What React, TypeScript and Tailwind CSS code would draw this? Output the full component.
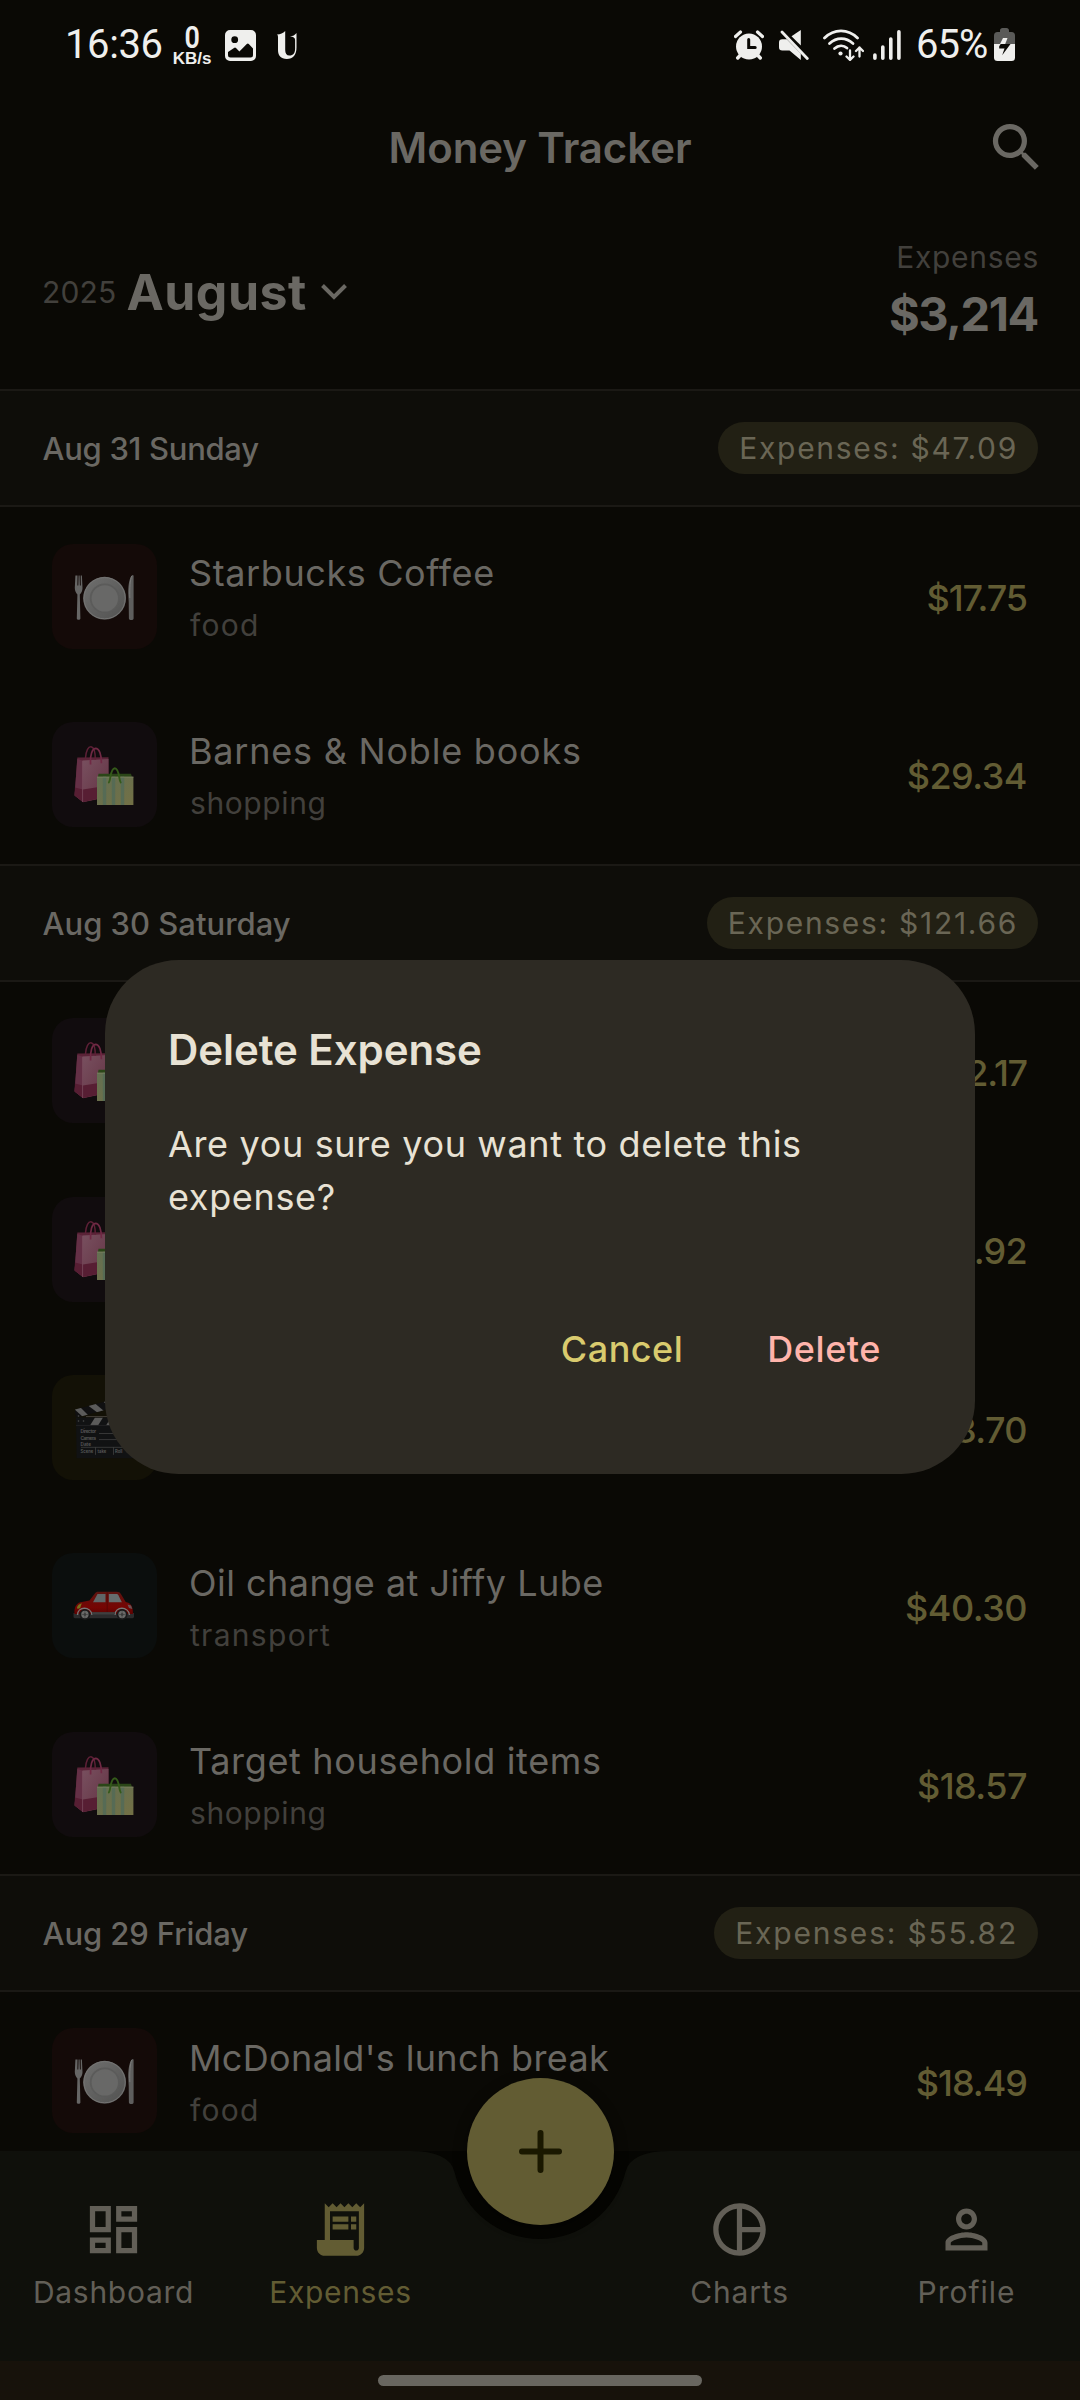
import type { ReactNode } from "react";

type Category = "food" | "shopping" | "movie" | "transport";

type Expense = {
  title: string;
  category: Category;
  amount: string;
  titleTracking?: string;
  amountTracking: string;
};

type Day = {
  date: string;
  dateTracking: string;
  total: string;
  totalTracking: string;
  expenses: Expense[];
};

const DAYS: Day[] = [
  {
    date: "Aug 31 Sunday",
    dateTracking: "tracking-[-0.3px]",
    total: "Expenses: $47.09",
    totalTracking: "tracking-[1.7px]",
    expenses: [
      { title: "Starbucks Coffee", category: "food", amount: "$17.75", titleTracking: "tracking-[0.6px]", amountTracking: "tracking-[-1.1px]" },
      { title: "Barnes & Noble books", category: "shopping", amount: "$29.34", titleTracking: "tracking-[0.78px]", amountTracking: "tracking-[-0.5px]" },
    ],
  },
  {
    date: "Aug 30 Saturday",
    dateTracking: "tracking-[0px]",
    total: "Expenses: $121.66",
    totalTracking: "tracking-[1.7px]",
    expenses: [
      { title: "", category: "shopping", amount: "$12.17", amountTracking: "tracking-[-1.2px]" },
      { title: "", category: "shopping", amount: "$31.92", amountTracking: "tracking-[-0.7px]" },
      { title: "", category: "movie", amount: "$18.70", amountTracking: "tracking-[-0.6px]" },
      { title: "Oil change at Jiffy Lube", category: "transport", amount: "$40.30", titleTracking: "tracking-[0.48px]", amountTracking: "tracking-[-0.5px]" },
      { title: "Target household items", category: "shopping", amount: "$18.57", titleTracking: "tracking-[0.65px]", amountTracking: "tracking-[-0.56px]" },
    ],
  },
  {
    date: "Aug 29 Friday",
    dateTracking: "tracking-[-0.1px]",
    total: "Expenses: $55.82",
    totalTracking: "tracking-[1.8px]",
    expenses: [
      { title: "McDonald's lunch break", category: "food", amount: "$18.49", titleTracking: "tracking-[0.35px]", amountTracking: "tracking-[-1px]" },
    ],
  },
];

const TILE_BG: Record<Category, string> = {
  food: "bg-[#140a08]",
  shopping: "bg-[#110c0e]",
  movie: "bg-[#131106]",
  transport: "bg-[#0b0e0d]",
};

const CATEGORY_TRACKING: Record<Category, string> = {
  food: "tracking-[1.270px]",
  shopping: "tracking-[0.600px]",
  movie: "tracking-[1px]",
  transport: "tracking-[1.300px]",
};

function PlateArt() {
  return (
    <svg viewBox="0 0 105 105" className="size-full">
      <defs>
        <linearGradient id="plate" x1="0" y1="0" x2="1" y2="1">
          <stop offset="0" stopColor="#6f6f6e" />
          <stop offset="1" stopColor="#525251" />
        </linearGradient>
      </defs>
      <circle cx="52.6" cy="54.2" r="21.4" fill="url(#plate)" />
      <circle cx="52.6" cy="54.2" r="20.6" fill="none" stroke="#747473" strokeWidth="1" />
      <circle cx="52.6" cy="54.2" r="14.8" fill="#5b5b5a" />
      <circle cx="52.8" cy="54.4" r="13.2" fill="#686867" />
      <path d="M23.4 31.5 22.8 44c0 3 1.2 5 2.6 6.5l-.6 24c0 1.8 3.6 1.8 3.6 0l-.6-24c1.6-1.5 2.7-3.5 2.7-6.5l-.6-12.500h-1.200l.1 10h-.9l-.3-10h-1l-.3 10h-.9l.1-10z" fill="#666665" />
      <path d="M80.400 31c-3 2-4.200 10-4.200 18l.5 9 .2 16.500c.2 2 4.600 2 4.700 0L81.600 31.500z" fill="#5e5e5d" />
      <path d="M79.800 32c-1.800 4-2.200 12-2 22" fill="none" stroke="#7a7a79" strokeWidth="1" />
    </svg>
  );
}

function BagsArt() {
  return (
    <svg viewBox="0 0 105 105" className="size-full">
      <defs>
        <linearGradient id="pinkFront" x1="0" y1="0" x2="1" y2="1">
          <stop offset="0" stopColor="#78505f" />
          <stop offset="1" stopColor="#633243" />
        </linearGradient>
        <linearGradient id="greenFront" x1="0" y1="0" x2="1" y2="1">
          <stop offset="0" stopColor="#636f52" />
          <stop offset="1" stopColor="#737045" />
        </linearGradient>
      </defs>
      <path d="M25.300 35.500 56.500 35.200 56.500 75 31 80.200 22.600 73.500z" fill="#5a2337" />
      <path d="M25.300 37 30.400 38.500 31 80 22.600 73.500z" fill="#643046" />
      <path d="M30.400 38.500 56.500 37 56.500 74.500 31 80z" fill="url(#pinkFront)" />
      <path d="M22.900 65.500 31 67.500 56.500 63.500 56.500 74.500 31 80 22.600 73.500z" fill="#571e33" />
      <path d="M30.600 39v41" stroke="#7a4c5e" strokeWidth="0.8" />
      <path d="M33.500 36c.5-8 3-11.500 5.500-11.300 3.500.4 4.300 7 4.300 13" fill="none" stroke="#5d2036" strokeWidth="1.500" />
      <path d="M38.600 42.500c-.6-9 1.500-16 4.900-16.200 4 0 6 7 5.900 15" fill="none" stroke="#702944" strokeWidth="1.700" />
      <path d="M46.500 51.700h32.500l1 3.300H46z" fill="#2b4618" />
      <rect x="45" y="54.700" width="36.400" height="28.300" fill="url(#greenFront)" />
      <path d="M52.500 54.700v28.300M61.500 54.700v28.300M70.500 54.700v28.300" stroke="#566b55" strokeWidth="3.400" />
      <path d="M45 55.200h36.400" stroke="#7b805f" strokeWidth="0.800" />
      <path d="M56.300 61c2.800-1.500 1.500-14.500 6.500-14.700 5 .2 3.700 13.200 6.500 14.700" fill="none" stroke="#345a1a" strokeWidth="1.900" />
    </svg>
  );
}

function ClapperArt() {
  return (
    <svg viewBox="0 0 105 105" className="size-full">
      <defs>
        <clipPath id="clapTop">
          <path d="M23 34.500 80 19.500 82 27 25.500 42.500 23.500 41z" />
        </clipPath>
        <clipPath id="clapBar">
          <path d="M24 42.500h58v7.800H24z" />
        </clipPath>
      </defs>
      <path d="M23 34.500 80 19.500 82 27 25.500 42.500 23.500 41z" fill="#101011" />
      <g clipPath="url(#clapTop)" fill="#5b5b5a">
        <path d="M21 33l7-1 8 8-5 2z" />
        <path d="M36 30.500l7-2 9 7.500-6 2z" />
        <path d="M51 26.500l7-2 9 7.500-6 2z" />
      </g>
      <path d="M24 42.500h58v40.800H24.600z" fill="#111213" />
      <g clipPath="url(#clapBar)" fill="#5b5b5a">
        <path d="M43 42.500h8l-5 8h-8z" />
        <path d="M59 42.500h8l-5 8h-8z" />
      </g>
      <path d="M34 41.600h47" stroke="#4a443e" strokeWidth="0.900" />
      <g fill="#4a4a4a">
        <circle cx="26.500" cy="41" r="0.800" />
        <circle cx="26.500" cy="46" r="0.800" />
        <circle cx="31.500" cy="46" r="0.800" />
      </g>
      <path d="M24 50.400h58" stroke="#2a2a2b" strokeWidth="0.700" />
      <g stroke="#464646" strokeWidth="0.700">
        <path d="M47 58.500h30M47 64.600h30M29 72.300h48M43.500 72.300v7.500M61.500 72.300v7.500" />
      </g>
      <g fill="#5a5a5a" fontFamily="Inter, sans-serif" fontSize="4.700" fontWeight="600">
        <text x="28.500" y="58.200" textLength="15.500">Director</text>
        <text x="28.500" y="64.600" textLength="15.500">Camera</text>
        <text x="28.500" y="71">Date</text>
        <text x="28.500" y="78" fontSize="4.200">Scene</text>
        <text x="45.500" y="78" fontSize="4.200">take</text>
        <text x="63" y="78" fontSize="4.200">Roll</text>
      </g>
    </svg>
  );
}

function CarArt() {
  return (
    <svg viewBox="0 0 105 105" className="size-full">
      <defs>
        <linearGradient id="carBody" x1="0" y1="0" x2="0" y2="1">
          <stop offset="0" stopColor="#5c1410" />
          <stop offset="0.700" stopColor="#760503" />
          <stop offset="1" stopColor="#5c0302" />
        </linearGradient>
      </defs>
      <path d="M21.500 60h60.500v3.500c0 1.200-.6 1.700-1.600 1.700H23c-1 0-1.500-.5-1.500-1.700z" fill="#2b2b2c" />
      <path d="M22.500 61c-.5-6 1.500-10.500 6-11.700l9-1.800 5-6.500c1-1.600 2-2.200 4-2.200h18c2.400 0 3.600.7 4.700 2.700l4.500 7.500c4.800 1 7.300 3.500 7.300 12z" fill="url(#carBody)" />
      <path d="M45.500 41h8v8.300H41z" fill="#5f6667" />
      <path d="M56.800 41h7.600c1 0 1.500.4 2 1.300l3.500 7H56.800z" fill="#666d6e" />
      <path d="M55.200 39v22" stroke="#4f0605" strokeWidth="0.700" />
      <path d="M25 54.500c.6-2 2.300-3.600 4.800-4.200l-1.600 4.700-2.600 1z" fill="#76721d" />
      <path d="M75.500 51.500l3.500 1 1.300 3.500-3.300-1z" fill="#6a5456" />
      <path d="M25.500 62c0-9 13.500-9 14.500 0M63 62c0-9 13.500-9 14.500 0" fill="none" stroke="#777675" strokeWidth="1.400" />
      <path d="M40 60.300h23" stroke="#3f3f3f" strokeWidth="2.400" />
      <g>
        <circle cx="32.900" cy="61.500" r="5.400" fill="#19191a" />
        <circle cx="32.900" cy="61.500" r="3.700" fill="#6a6a69" />
        <circle cx="32.900" cy="61.500" r="1.300" fill="#303030" />
        <path d="M32.900 58v7M29.400 61.500h7" stroke="#3f3f3f" strokeWidth="0.600" />
        <circle cx="70.100" cy="61.500" r="5.400" fill="#19191a" />
        <circle cx="70.100" cy="61.500" r="3.700" fill="#6a6a69" />
        <circle cx="70.100" cy="61.500" r="1.300" fill="#303030" />
        <path d="M70.100 58v7M66.600 61.500h7" stroke="#3f3f3f" strokeWidth="0.600" />
      </g>
    </svg>
  );
}

const ART: Record<Category, () => ReactNode> = {
  food: PlateArt,
  shopping: BagsArt,
  movie: ClapperArt,
  transport: CarArt,
};

function StatusBar() {
  return (
    <div className="flex h-[89px] shrink-0 items-center text-[#efefed]">
      <span className="ml-[65px] w-[97px] font-['Roboto'] text-[40px] leading-none tracking-[-0.4px]">16:36</span>
      <div className="ml-[9px] flex w-[42px] flex-col items-center font-['Roboto']">
        <span className="scale-x-[0.84] text-[32px] leading-[28px] font-semibold">0</span>
        <span className="font-['Liberation_Sans'] text-[17px] leading-[15px] font-bold">KB/s</span>
      </div>
      <svg viewBox="0 0 31 31" className="mt-[2px] ml-[12px] size-[31px]" fill="currentColor">
        <path
          fillRule="evenodd"
          d="M5 0h21a5 5 0 0 1 5 5v21a5 5 0 0 1-5 5H5a5 5 0 0 1-5-5V5a5 5 0 0 1 5-5zM9.700 6.300a3.400 3.400 0 1 0 0 6.800 3.400 3.400 0 0 0 0-6.800zM3 22v3a2.500 2.500 0 0 0 2.500 2.500h20A2.500 2.500 0 0 0 28 25v-6.500L23.800 14c-.7-.7-1.300-.7-2 0l-7.400 7.500-3.400-3.600c-.7-.7-1.300-.7-2 0z"
        />
      </svg>
      <svg viewBox="0 0 20 28" className="mt-[1px] ml-[21px] h-[28px] w-[20px]" fill="currentColor">
        <path d="M0 3.500C3.500 3.500 6 2 8.200 0v19c0 3.500 1.300 5.500 4.300 5.500 3.800 0 5.600-2.500 5.600-7V9c0-2.500-1.700-3.200-5.100-3.500 3-.3 5-1.500 6.500-3.500v14.500c0 7-3.300 11.500-9.700 11.500C3.800 28 1 24.500 1 19V6.500C1 4.800.8 4 0 3.500z" />
      </svg>

      <svg viewBox="0 0 30 30" className="ml-auto size-[30px]" fill="currentColor">
        <circle cx="15" cy="16.500" r="13" />
        <path d="M1.500 6.500 6.500 2M28.500 6.500 23.500 2" stroke="currentColor" strokeWidth="3.200" strokeLinecap="round" />
        <path d="M6 25.500 3.700 28M24 25.500l2.300 2.500" stroke="currentColor" strokeWidth="3.400" strokeLinecap="round" />
        <path d="M14.700 9.500v8h6.500" fill="none" stroke="#0a0905" strokeWidth="3" strokeLinecap="round" />
      </svg>
      <svg viewBox="0 0 30 30" className="ml-[15px] size-[30px]" fill="currentColor">
        <path d="M21.800 0v15.500L12.500 6.300z" />
        <path d="M3.300 9.300h4.500L21.800 23.500V30L10.500 20.500H3.300A3.300 3.300 0 0 1 0 17.200v-4.600a3.300 3.300 0 0 1 3.300-3.300z" />
        <path d="M3 2 28.300 28.500" stroke="currentColor" strokeWidth="2.800" strokeLinecap="round" />
      </svg>
      <svg viewBox="0 0 41 32" className="ml-[14px] h-[32px] w-[41px]" fill="none" stroke="currentColor" strokeLinecap="round" strokeLinejoin="round">
        <path d="M1.500 9c9.500-9.500 23.500-9.500 33 0" strokeWidth="2.800" />
        <path d="M6.500 14.500c7-6.500 16.500-6.500 23.500 0" strokeWidth="2.800" />
        <path d="M11.500 19.500c4-3.500 9-3.500 12.500-.5" strokeWidth="2.800" />
        <circle cx="17.500" cy="24.500" r="2.100" fill="currentColor" stroke="none" />
        <path d="M27 21.500v9M23.500 27.500l3.500 3.500 3.500-3.500" strokeWidth="2.300" />
        <path d="M36.500 27.500v-9M33 22l3.500-3.500L40 22" strokeWidth="2.300" />
      </svg>
      <svg viewBox="0 0 28 30" className="ml-[9px] h-[30px] w-[28px]" stroke="currentColor" strokeWidth="3.600" strokeLinecap="round">
        <path d="M1.900 25v3.200M9.800 17v11.200M17.800 9v19.200M25.900 1.800v26.400" />
      </svg>
      <span className="ml-[15px] w-[73px] font-['Roboto'] text-[40px] leading-none tracking-[-1px]">65%</span>
      <svg viewBox="0 0 21 33" className="mr-[65px] ml-[5px] h-[33px] w-[21px]">
        <path d="M6 4V2.500C6 1 7 0 8.500 0h4C14 0 15 1 15 2.500V4h2.500A3.500 3.500 0 0 1 21 7.500V16H0V7.500A3.500 3.500 0 0 1 3.500 4z" fill="#5a5a58" />
        <path d="M0 16h21v13.500a3.500 3.500 0 0 1-3.500 3.500h-14A3.500 3.500 0 0 1 0 29.500z" fill="currentColor" />
        <path d="M9 10h4.500L11.200 16H6z" fill="currentColor" />
        <path d="M5.200 18.300 6.700 16h9.800L8.200 27.300 10.500 20.500H5.200z" fill="#0a0905" />
      </svg>
    </div>
  );
}

function DayHeader({ day }: { day: Day }) {
  return (
    <div className="flex h-[118px] items-start justify-between border-y-2 border-[#1b1915] bg-[#0e0d09] pt-[31px] pr-[42px] pl-[42.500px]">
      <span className={`mt-[6px] text-[31px] leading-[42px] font-medium text-[#6a6863] ${day.dateTracking}`}>{day.date}</span>
      <span className={`h-[52px] rounded-full bg-[#222014] pr-[20px] pl-[21px] text-[30px] leading-[52px] text-[#6a6655] ${day.totalTracking}`}>
        {day.total}
      </span>
    </div>
  );
}

function ExpenseRow({ item }: { item: Expense }) {
  const Art = ART[item.category];
  return (
    <div className="flex h-[178.400px] items-start pr-[53px] pl-[52.400px]">
      <div className={`mt-[36.500px] size-[105px] shrink-0 rounded-[21px] ${TILE_BG[item.category]}`}>
        <Art />
      </div>
      <div className="flex flex-1 flex-col pt-[40px] pl-[31.600px]">
        <span className={`h-[52px] text-[36px] leading-[52px] text-[#6a6863] ${item.titleTracking ?? ""}`}>{item.title}</span>
        <span className={`pl-px text-[30px] leading-[52px] text-[#42403c] ${CATEGORY_TRACKING[item.category]}`}>{item.category}</span>
      </div>
      <span className={`mt-[67px] text-[36px] leading-[48px] font-medium text-[#625c33] ${item.amountTracking}`}>{item.amount}</span>
    </div>
  );
}

function NavItem({ label, tracking, active, children }: { label: string; tracking: string; active?: boolean; children: ReactNode }) {
  return (
    <div className={`flex w-[227px] flex-col items-center pt-[47px] ${active ? "text-[#625c33]" : "text-[#625f57]"}`}>
      <svg viewBox="0 0 24 24" className="size-[63px]" fill="currentColor">
        {children}
      </svg>
      <span className={`mt-[10px] text-[30px] leading-[42px] ${tracking}`}>{label}</span>
    </div>
  );
}

function BottomNav() {
  return (
    <div className="relative z-10 h-[210px] shrink-0">
      <svg viewBox="0 0 1080 210" className="absolute inset-0 h-[210px] w-[1080px]">
        <rect x="400" width="280" height="100" fill="#050502" />
        <path d="M0 0H410Q449.400 0 454.500 20.900A88 88 0 0 0 625.500 20.900Q630.600 0 670 0H1080V210H0z" fill="#0f100b" />
      </svg>
      <div className="relative flex justify-between">
        <div className="flex">
          <NavItem label="Dashboard" tracking="tracking-[0.700px]">
            <path d="M19 5v2h-4V5h4M9 5v6H5V5h4m10 8v6h-4v-6h4M9 17v2H5v-2h4M21 3h-8v6h8V3zM11 3H3v10h8V3zm10 8h-8v10h8V11zm-10 4H3v6h8v-6z" />
          </NavItem>
          <NavItem label="Expenses" tracking="tracking-[0.670px]" active>
            <path d="M19.500 3.500 18 2l-1.500 1.500L15 2l-1.500 1.500L12 2l-1.500 1.500L9 2 7.500 3.500 6 2v14H3v3c0 1.660 1.340 3 3 3h12c1.660 0 3-1.340 3-3V2l-1.500 1.500zM19 19c0 .55-.45 1-1 1s-1-.45-1-1v-3H8V5h11v14z" />
            <path d="M9 7h6v2H9zM16 7h2v2h-2zM9 10h6v2H9zM16 10h2v2h-2z" />
          </NavItem>
        </div>
        <div className="flex">
          <NavItem label="Charts" tracking="tracking-[0.840px]">
            <path d="M12 2C6.480 2 2 6.480 2 12s4.480 10 10 10 10-4.480 10-10S17.520 2 12 2zm1 2.070c3.610.45 6.480 3.330 6.930 6.930H13V4.070zM4 12c0-4.060 3.070-7.440 7-7.930v15.870c-3.930-.5-7-3.880-7-7.940zm9 7.930V13h6.930A8.002 8.002 0 0 1 13 19.930z" />
          </NavItem>
          <NavItem label="Profile" tracking="tracking-[0.990px]">
            <path d="M12 6c1.100 0 2 .9 2 2s-.9 2-2 2-2-.9-2-2 .9-2 2-2m0 9c2.700 0 5.800 1.290 6 2v1H6v-.990c.2-.72 3.300-2.010 6-2.010m0-11C9.790 4 8 5.790 8 8s1.790 4 4 4 4-1.790 4-4-1.790-4-4-4zm0 9c-2.670 0-8 1.340-8 4v3h16v-3c0-2.660-5.330-4-8-4z" />
          </NavItem>
        </div>
      </div>
      <button className="absolute top-[-73.500px] left-[466.500px] flex size-[147px] items-center justify-center rounded-full bg-[#625c33] shadow-[0_4px_14px_rgba(0,0,0,0.45)]">
        <svg viewBox="0 0 43 43" className="size-[43px]" stroke="#1a1800" strokeWidth="6" strokeLinecap="round">
          <path d="M21.500 3v37M3 21.500h37" />
        </svg>
      </button>
    </div>
  );
}

function DeleteDialog() {
  return (
    <div className="absolute top-[960px] left-[105px] z-20 flex h-[514px] w-[870px] flex-col rounded-[73.500px] bg-[#2d2a23] px-[63px] pt-[63px]">
      <h2 className="text-[42px] leading-[54px] font-semibold tracking-[-0.070px] text-[#e8e2d4]">Delete Expense</h2>
      <p className="mt-[41px] text-[36px] leading-[53px] tracking-[0.650px] text-[#e8e2d4]">Are you sure you want to delete this expense?</p>
      <div className="mt-[101px] flex justify-end gap-[84px] pr-[31px] text-[36px] leading-[48px] font-medium">
        <button className="tracking-[0.500px] text-[#d9cb6e]">Cancel</button>
        <button className="tracking-[0.550px] text-[#ffb4ab]">Delete</button>
      </div>
    </div>
  );
}

export default function App() {
  return (
    <div className="relative flex h-[2400px] w-[1080px] flex-col overflow-hidden bg-[#0a0905] font-['Inter',sans-serif]">
      <StatusBar />
      <header className="relative flex h-[118px] shrink-0 items-center justify-center">
        <h1 className="text-[42px] leading-[54px] font-semibold tracking-[-0.080px] text-[#6a6863]">Money Tracker</h1>
        <svg viewBox="0 0 24 24" className="absolute top-[27px] right-[32px] size-[63px]" fill="#6a6863">
          <path d="M15.500 14h-.79l-.28-.27A6.471 6.471 0 0 0 16 9.500 6.500 6.500 0 1 0 9.500 16c1.610 0 3.090-.590 4.230-1.570l.27.28v.79l5 4.990L20.490 19l-4.990-5zm-6 0C7.010 14 5 11.990 5 9.500S7.010 5 9.500 5 14 7.010 14 9.500 11.990 14 9.500 14z" />
        </svg>
      </header>
      <section className="flex h-[182px] shrink-0 items-start justify-between pt-[29px] pr-[42px] pl-[42px]">
        <div className="flex h-[112px] items-center text-[#6a6863]">
          <span className="-mt-px text-[30px] leading-[42px] tracking-[0.160px] text-[#42403c]">2025</span>
          <span className="ml-[10px] text-[50px] leading-[60px] font-bold tracking-[0.500px]">August</span>
          <svg viewBox="0 0 26 16" className="ml-[14px] h-[16px] w-[26px]" fill="none" stroke="currentColor" strokeWidth="4">
            <path d="M1.500 1.500 13 13 24.500 1.500" />
          </svg>
        </div>
        <div className="flex flex-col items-end">
          <span className="-mr-px text-[30px] leading-[42px] tracking-[0.700px] text-[#42403c]">Expenses</span>
          <span className="text-[47px] leading-[72px] font-bold tracking-[-1.400px] text-[#6a6863]">$3,214</span>
        </div>
      </section>
      <main className="min-h-0 flex-1 overflow-hidden">
        {DAYS.map((day) => (
          <section key={day.date}>
            <DayHeader day={day} />
            {day.expenses.map((item, i) => (
              <ExpenseRow key={i} item={item} />
            ))}
          </section>
        ))}
      </main>
      <BottomNav />
      <div className="flex h-[39px] shrink-0 justify-center bg-[#17120b] pt-[14px]">
        <div className="h-[11px] w-[324px] rounded-full bg-[#686660]" />
      </div>
      <DeleteDialog />
    </div>
  );
}
